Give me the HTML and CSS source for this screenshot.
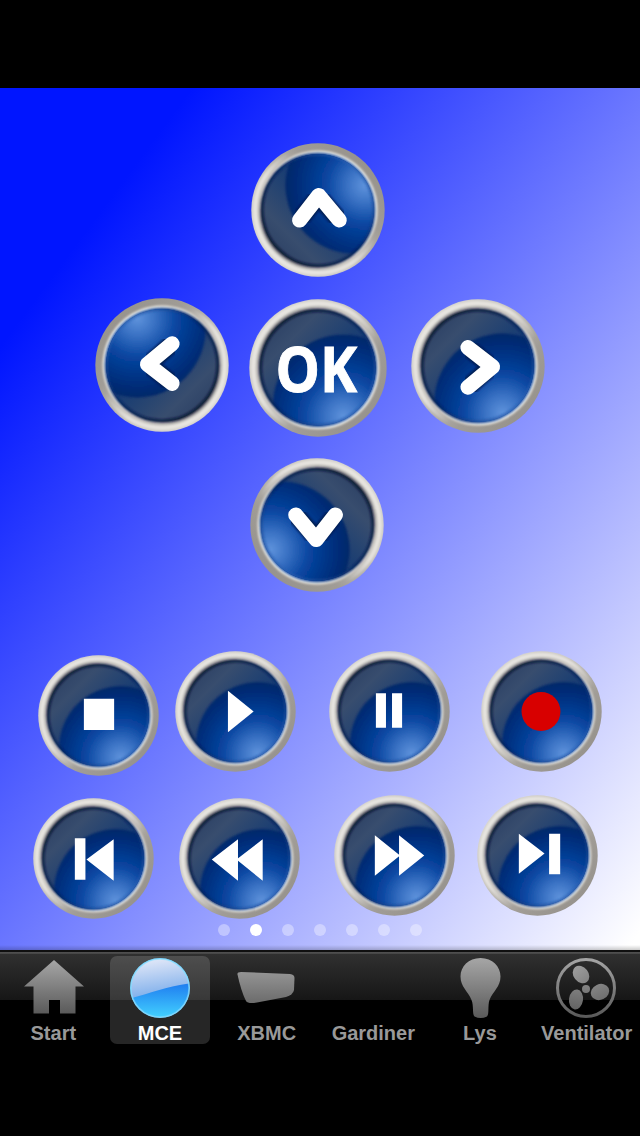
FILE: index.html
```html
<!DOCTYPE html>
<html lang="da">
<head>
<meta charset="utf-8">
<title>MCE</title>
<link rel="stylesheet" href="styles.css">
</head>
<body>
<svg class="defs" width="0" height="0" aria-hidden="true">
  <defs>
    <linearGradient id="rim" x1=".12" y1=".12" x2=".88" y2=".88">
      <stop offset="0" stop-color="#d5d3ce"/><stop offset=".35" stop-color="#c8c5bf"/>
      <stop offset=".7" stop-color="#a09c96"/><stop offset="1" stop-color="#96928c"/>
    </linearGradient>
    <linearGradient id="gleam" x1=".12" y1=".12" x2=".88" y2=".88">
      <stop offset="0" stop-color="#e8e6e1"/><stop offset=".4" stop-color="#e4e1dc"/>
      <stop offset=".65" stop-color="#e4e1dc" stop-opacity="0"/>
    </linearGradient>
    <linearGradient id="lip" x1=".15" y1=".15" x2=".85" y2=".85">
      <stop offset="0" stop-color="#8f9093"/><stop offset=".35" stop-color="#d0cdc8"/>
      <stop offset="1" stop-color="#f0eee8"/>
    </linearGradient>
    <linearGradient id="edge" x1=".15" y1=".15" x2=".85" y2=".85">
      <stop offset="0" stop-color="#020b26"/><stop offset=".5" stop-color="#03205a"/>
      <stop offset="1" stop-color="#2a5fb2"/>
    </linearGradient>
    <radialGradient id="glass" gradientUnits="userSpaceOnUse" cx="82" cy="102" r="78">
      <stop offset="0" stop-color="#5f93dc"/><stop offset=".2" stop-color="#3a72c4"/>
      <stop offset=".45" stop-color="#0845a0"/><stop offset=".75" stop-color="#002e7c"/>
      <stop offset="1" stop-color="#00245e"/>
    </radialGradient>
    <linearGradient id="shine" x1="0" y1="0" x2="1" y2="1">
      <stop offset="0" stop-color="#1c3058"/><stop offset=".3" stop-color="#384d6e"/>
      <stop offset=".5" stop-color="#1c3f72"/><stop offset=".75" stop-color="#063680"/>
    </linearGradient>
    <linearGradient id="tab-gray" x1="0" y1="0" x2="0" y2="1">
      <stop offset="0" stop-color="#a6a6a6"/><stop offset="1" stop-color="#5a5a5a"/>
    </linearGradient>
    <linearGradient id="tab-gray-abs" gradientUnits="userSpaceOnUse" x1="0" y1="0" x2="0" y2="60">
      <stop offset="0" stop-color="#a6a6a6"/><stop offset="1" stop-color="#585858"/>
    </linearGradient>
    <linearGradient id="orb-top" gradientUnits="userSpaceOnUse" x1="26" y1="0" x2="32" y2="40">
      <stop offset="0" stop-color="#e2e8f8"/><stop offset="1" stop-color="#78abea"/>
    </linearGradient>
    <linearGradient id="orb-low" x1="0" y1="0" x2="0" y2="1">
      <stop offset="0" stop-color="#1f7df0"/><stop offset="1" stop-color="#43d2ff"/>
    </linearGradient>
    <clipPath id="face"><circle cx="60" cy="60" r="50"/></clipPath>
    <clipPath id="orb"><circle cx="30" cy="30" r="29"/></clipPath>
    <filter id="soft"><feGaussianBlur stdDeviation=".8"/></filter>
    <g id="disc">
      <circle cx="60" cy="60" r="59.700" fill="url(#rim)"/>
      <circle cx="59.800" cy="59.800" r="56" fill="none" stroke="url(#gleam)" stroke-width="4" filter="url(#soft)"/>
      <circle cx="60" cy="60" r="53.300" fill="url(#lip)" filter="url(#soft)"/>
      <circle cx="60" cy="60" r="51.300" fill="url(#edge)" filter="url(#soft)"/>
      <g clip-path="url(#face)">
        <rect width="120" height="120" fill="url(#shine)"/>
        <circle cx="82" cy="92" r="61" fill="url(#glass)" filter="url(#soft)"/>
        <circle cx="60" cy="60" r="50" fill="none" stroke="url(#edge)" stroke-opacity=".7" stroke-width="3" filter="url(#soft)"/>
      </g>
    </g>
    <g id="arrow">
      <use href="#disc"/>
      <path d="M51 43.500 72 60.500 51 79" fill="none" stroke="#001a50" stroke-width="16" stroke-linecap="round" stroke-linejoin="round" filter="url(#soft)"/>
      <path d="M51 43.500 73 60.700 51 79" fill="none" stroke="#fff" stroke-width="13.500" stroke-linecap="round" stroke-linejoin="round"/>
    </g>
  </defs>
</svg>
<div class="phone">
  <main class="screen">
    <div class="row row-up">
      <svg class="key arrow" viewBox="0 0 120 120"><use href="#arrow" transform="rotate(-90 60 60)"/></svg>
    </div>
    <div class="row row-mid">
      <svg class="key arrow" viewBox="0 0 120 120"><use href="#arrow" transform="rotate(180 60 60)"/></svg>
      <svg class="key ok" viewBox="0 0 120 120"><use href="#disc"/><text class="ok-text" x="23" y="80.800" textLength="71" lengthAdjust="spacingAndGlyphs">OK</text></svg>
      <svg class="key arrow" viewBox="0 0 120 120"><use href="#arrow"/></svg>
    </div>
    <div class="row row-down">
      <svg class="key arrow" viewBox="0 0 120 120"><use href="#arrow" transform="rotate(90 60 60)"/></svg>
    </div>
    <div class="row row-play">
      <svg class="key stop" viewBox="0 0 120 120"><use href="#disc"/><path class="glyph" d="M45.500 43.500h30v31h-30z"/></svg>
      <svg class="key play" viewBox="0 0 120 120"><use href="#disc"/><path class="glyph" d="M52.500 39.500v41L78 60z"/></svg>
      <svg class="key pause" viewBox="0 0 120 120"><use href="#disc"/><path class="glyph" d="M46.500 42h10v34h-10zM62.500 42h10v34h-10z"/></svg>
      <svg class="key record" viewBox="0 0 120 120"><use href="#disc"/><circle cx="59.500" cy="60" r="19.300" fill="#d80000"/></svg>
    </div>
    <div class="row row-skip">
      <svg class="key prev" viewBox="0 0 120 120"><use href="#disc"/><path class="glyph" d="M41.500 40h10.500v41H41.500zM80 41v41L53 61z"/></svg>
      <svg class="key rewind" viewBox="0 0 120 120"><use href="#disc"/><path class="glyph" d="M58.500 41v41L32.500 61zM83 41v41L57 61z"/></svg>
      <svg class="key forward" viewBox="0 0 120 120"><use href="#disc"/><path class="glyph" d="M40.500 40v40l25-20zM64.500 40v40l25-20z"/></svg>
      <svg class="key next" viewBox="0 0 120 120"><use href="#disc"/><path class="glyph" d="M41.500 38.500v39.500l25.500-20zM71.500 38.500h11v40h-11z"/></svg>
    </div>
    <div class="dots"><i></i><i class="on"></i><i></i><i></i><i></i><i></i><i></i></div>
  </main>
  <nav class="tabs">
    <div class="tab">
      <svg class="icon" viewBox="0 0 60 60"><path d="M31 2 61 28.500H52.500V55.500H37V42H26V55.500H10.500V28.500H1z" fill="url(#tab-gray)"/></svg>
      <span>Start</span>
    </div>
    <div class="tab active">
      <svg class="icon" viewBox="0 0 60 60"><circle cx="30" cy="30" r="30" fill="#72cdfb"/><g clip-path="url(#orb)"><rect width="60" height="60" fill="url(#orb-top)"/><path d="M0 40.500C20 35.500 38 28 60 25.500V60H0z" fill="url(#orb-low)"/></g><circle cx="30" cy="30" r="29" fill="none" stroke="#8be0ff" stroke-opacity=".6" stroke-width="1.500"/></svg>
      <span>MCE</span>
    </div>
    <div class="tab">
      <svg class="icon" viewBox="0 0 60 60"><path d="M0.500 16.500Q0 14 4 14L53 16Q57.500 16.500 57.500 20L57 32Q56 37 49 39L20 44.500Q11 46 9 43Q4 33 0.500 16.500z" fill="url(#tab-gray-abs)"/></svg>
      <span>XBMC</span>
    </div>
    <div class="tab">
      <div class="icon"></div>
      <span>Gardiner</span>
    </div>
    <div class="tab">
      <svg class="icon" viewBox="0 0 60 60"><path d="M30.500 0C18.500 0 10.500 8.500 10.500 18.500C10.500 29 18 33 21.500 42C24 48 22 56 24.500 58.500Q30.500 61.500 37 58.500C39.500 56 37.500 48 39.500 42C43 33 50.500 29 50.500 18.500C50.500 8.500 42.500 0 30.500 0z" fill="url(#tab-gray)"/></svg>
      <span>Lys</span>
    </div>
    <div class="tab">
      <svg class="icon fan" viewBox="0 0 60 60"><circle cx="30" cy="30" r="28.500" fill="none" stroke="url(#tab-gray-abs)" stroke-width="3"/><g fill="url(#tab-gray-abs)"><circle cx="30" cy="31" r="4"/><ellipse cx="25" cy="16.500" rx="7.500" ry="9.500" transform="rotate(-38 25 16.500)"/><ellipse cx="44" cy="34" rx="9.500" ry="7.800" transform="rotate(-25 44 34)"/><ellipse cx="20" cy="41.500" rx="7" ry="10" transform="rotate(8 20 41.500)"/></g></svg>
      <span>Ventilator</span>
    </div>
  </nav>
</div>
</body>
</html>
```
FILE: styles.css
```css
body {
  margin: 0;
  background: #000;
}
.defs {
  position: absolute;
}
.phone {
  width: 640px;
  height: 1136px;
  padding-top: 88px;
  box-sizing: border-box;
  overflow: hidden;
  background: #000;
}
.screen {
  display: flex;
  flex-direction: column;
  height: 862px;
  padding-top: 55px;
  box-sizing: border-box;
  background:
    linear-gradient(to bottom, transparent 857px, rgba(0, 0, 0, .2) 862px),
    linear-gradient(to bottom right, #0015ff 15%, #fff 99%);
}
.row {
  display: flex;
  align-items: flex-start;
  flex: none;
}
.key {
  display: block;
  flex: none;
  width: 121px;
  height: 121px;
}
.arrow {
  width: 134px;
  height: 134px;
}
.row-up {
  height: 155px;
  padding-left: 251px;
}
.row-mid {
  height: 160px;
  padding-left: 95px;
  gap: 19px;
}
.ok {
  width: 138px;
  height: 138px;
  margin: 1px 5px 0 1px;
}
.row-mid .arrow:last-child {
  margin-top: 1px;
}
.row-down {
  height: 193px;
  padding-left: 250px;
}
.row-play {
  height: 144px;
  padding-left: 38px;
}
.stop {
  margin-top: 4px;
}
.play {
  margin-left: 16px;
}
.pause {
  margin-left: 33px;
}
.record {
  margin-left: 31px;
}
.row-skip {
  height: 129px;
  padding-left: 33px;
}
.prev,
.rewind {
  margin-top: 3px;
}
.rewind {
  margin-left: 25px;
}
.forward {
  margin-left: 34px;
}
.next {
  margin-left: 22px;
}
.glyph {
  fill: #fff;
}
.ok-text {
  fill: #fff;
  font: 700 55px "Open Sans", "Noto Sans", sans-serif;
  stroke: #fff;
  stroke-width: .8px;
}
.dots {
  display: flex;
  justify-content: center;
  gap: 20px;
}
.dots i {
  width: 12px;
  height: 12px;
  border-radius: 50%;
  background: rgba(255, 255, 255, .36);
}
.dots .on {
  background: #fff;
}
.tabs {
  display: grid;
  grid-template-columns: repeat(6, 1fr);
  height: 98px;
  padding-top: 6px;
  box-sizing: border-box;
  background: linear-gradient(to bottom, #101010 2px, #525252 2px, #444 4px, #303030 4px, #161616 50px, #000 50px);
}
.tab {
  display: flex;
  flex-direction: column;
  align-items: center;
  justify-self: center;
  width: 100px;
  height: 88px;
  padding-top: 2px;
  box-sizing: border-box;
  border-radius: 7px;
  color: #999;
  font: bold 20px/30px "Liberation Sans", Arial, sans-serif;
}
.active {
  background: rgba(255, 255, 255, .15);
  color: #fff;
}
.icon {
  display: block;
  flex: none;
  width: 60px;
  height: 60px;
  overflow: visible;
}
.fan {
  margin-right: 2px;
}
```
